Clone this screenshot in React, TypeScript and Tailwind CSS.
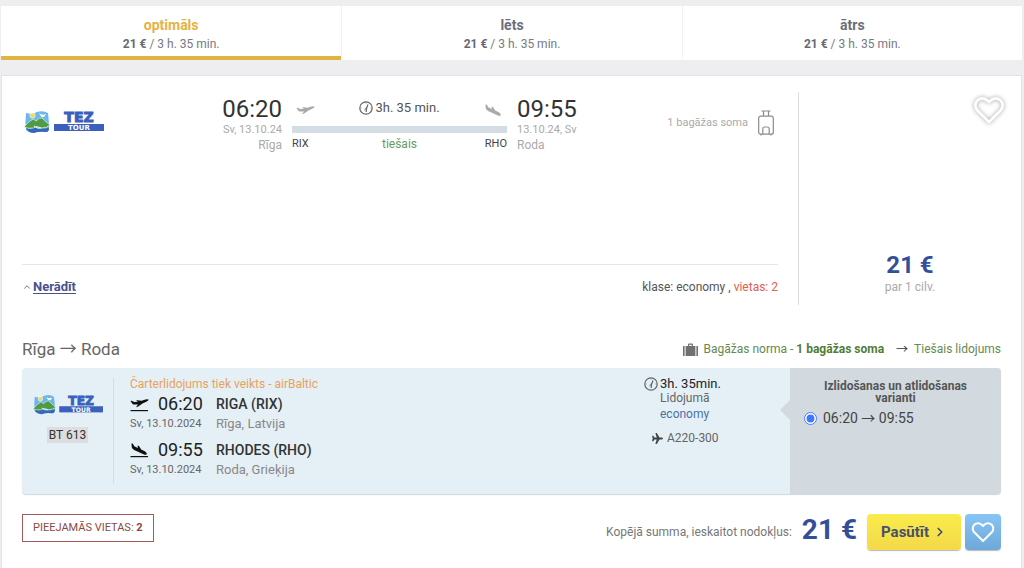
// App.tsx - Flight offer card with sort tabs, itinerary details and order bar.
import { ChevronRight, ChevronUp } from "lucide-react";

const tabs = [
  { id: "optimal", label: "optimāls", active: true },
  { id: "cheap", label: "lēts", active: false },
  { id: "fast", label: "ātrs", active: false },
];

const stops = [
  { kind: "takeoff", time: "06:20", airport: "RIGA (RIX)", place: "Rīga, Latvija" },
  { kind: "landing", time: "09:55", airport: "RHODES (RHO)", place: "Roda, Grieķija" },
];

function TezLogo({ className }: { className?: string }) {
  return (
    <svg viewBox="0 0 80 24" className={className} role="img" aria-label="Tez Tour">
      <path d="M2 3Q8 5 13 2Q19 0 24 3Q25 10 25 18Q25 22 22 22Q15 21 10 22.500Q5 23 2 20Q1 12 2 3Z" fill="#6db5ea" />
      <path d="M15 3Q18 6 22 4L20 7Q17 8 15 3Z" fill="#ffffff" />
      <circle cx="8.500" cy="5.500" r="3" fill="#fff" opacity="0.7" />
      <circle cx="8.500" cy="5.500" r="2.200" fill="#f7dc4a" />
      <path d="M0 17Q4 12 9 9Q11 10 12 11Q16 7 18 8Q22 12 26 15Q23 18 17 18Q12 15 10 18Q4 19 0 17Z" fill="#4f9c45" stroke="#fff" strokeWidth="0.6" />
      <path d="M2 18Q7 20 12 17.500Q18 20 25 17.500Q25 22 22 22Q15 21 10 23Q4 23 2 18Z" fill="#3568b5" />
      <path d="M10 16Q13 19 17 18" fill="none" stroke="#fff" strokeWidth="1" />
      <rect x="30" y="14" width="50" height="7" fill="#3a5fbd" />
      <text x="55" y="12" textAnchor="middle" fontFamily="DejaVu Sans" fontWeight="700" fontSize="14" fill="#3a5fbd" stroke="#3a5fbd" strokeWidth="1">
        TEZ
      </text>
      <text x="55" y="20" textAnchor="middle" fontFamily="DejaVu Sans" fontWeight="700" fontSize="7" fill="#fff">
        TOUR
      </text>
    </svg>
  );
}

function PlaneIcon({ kind, line, className }: { kind: string; line?: boolean; className?: string }) {
  return (
    <svg viewBox="0 0 19 18" className={className} fill="currentColor" aria-hidden="true">
      {kind === "takeoff" ? (
        <path d="M0.500 5L1.800 4.800L4.200 6.100L8 5.700L6 4.600L7.600 4.300L11.500 4.700L15.500 3.500Q18.300 2.800 18.700 3.700Q18.500 4.800 15.800 5.900L12.500 7.400L7.800 10.800L6 11.200L8 8.500L3.500 8.600Q2.500 8.400 0.500 5Z" />
      ) : (
        <path d="M1.500 1.200L2.900 1.700L4.300 4.300L7.800 6L7.600 3.400L9 4L11.200 7.400L14.800 9.200Q17.200 10.800 16.800 12.200Q15.900 13.200 13.400 12.200L4.100 8Q1.800 6.300 1.700 5Z" />
      )}
      {line && <rect x="0.500" y="14" width="17.500" height="1.200" />}
    </svg>
  );
}

function ClockIcon() {
  return (
    <svg viewBox="0 0 14 14" className="size-3.5 text-[#666]" fill="none" stroke="currentColor" aria-hidden="true">
      <circle cx="7" cy="7" r="6.200" strokeWidth="1.200" />
      <path d="M9 3.500L7.500 7.500L7.200 11" strokeWidth="1.200" />
      <path d="M8 6.500Q5.800 6.800 5.800 9.500" strokeWidth="0.800" />
      <path d="M7 1.500v1M12.500 7h-1M1.500 7h1" strokeWidth="0.700" />
    </svg>
  );
}

function BagIcon() {
  return (
    <svg viewBox="0 0 16 26" className="h-[26px] w-4 text-[#8c8c8c]" fill="none" stroke="currentColor" strokeWidth="1.200" aria-hidden="true">
      <path d="M3.500 1h9M5.500 1v5M10.500 1v5" />
      <rect x="0.700" y="6.200" width="14.600" height="18" rx="2" />
      <path d="M4.800 24v-5q0-2 2-2h2.400q2 0 2 2v5M3 24v1.500M13 24v1.500" />
    </svg>
  );
}

function SuitcaseIcon() {
  return (
    <svg viewBox="0 0 15 13" className="h-[13px] w-[15px] text-[#707070]" fill="currentColor" aria-hidden="true">
      <path d="M0 3h1.600v10H0zM13.400 3H15v10h-1.600zM2.600 3H5V1.500Q5 0.500 6 0.500h3q1 0 1 1V3h2.400v10H2.600zM6.200 3h2.600V1.700H6.200z" fillRule="evenodd" />
    </svg>
  );
}

function JetIcon() {
  return (
    <svg viewBox="0 0 11 11" className="size-[11px] text-[#444]" fill="currentColor" aria-hidden="true">
      <path d="M0 2.800h1.200L2.500 4.600h2.200L3.400 0h1.400l2.700 4.600H10q1 .4 1 .9t-1 .9H7.500L4.800 11H3.400l1.300-4.600H2.500L1.200 8.200H0l.7-2.700z" />
    </svg>
  );
}

function HeartIcon({ className }: { className?: string }) {
  return (
    <svg viewBox="0 0 24 24" className={className} fill="none" stroke="#fff" strokeWidth="2" strokeLinejoin="round" aria-hidden="true">
      <path d="M12 21L3 12Q0.500 8.500 3 5Q7 1.500 11 5L12 6L13 5Q17 1.500 21 5Q23.500 8.500 21 12Z" />
    </svg>
  );
}

function Arrow() {
  return <span className="font-['Noto_Sans_CJK_JP',sans-serif] leading-none">→</span>;
}

function SortTabs() {
  return (
    <div className="mt-1.5 mr-0.5 ml-px grid grid-cols-3 bg-white" role="tablist">
      {tabs.map((tab) => (
        <button
          key={tab.id}
          type="button"
          role="tab"
          aria-selected={tab.active}
          className={
            tab.active
              ? "h-[54px] border-b-4 border-[#e3b341] pt-1.5 text-[#e3b341]"
              : "h-[54px] border-b-4 border-l border-b-transparent border-l-[#f0f1f4] pt-1.5 text-[#6b6e78]"
          }
        >
          <span className="block text-sm leading-5 font-bold">{tab.label}</span>
          <span className="block text-xs leading-[18px] text-[#777a83]">
            <b className="text-[#666974]">21 €</b> / 3 h. 35 min.
          </span>
        </button>
      ))}
    </div>
  );
}

function FlightSummary() {
  return (
    <div className="flex min-h-[173px] items-start border-b border-[#e6e6e6] pt-0.5">
      <TezLogo className="mt-4 ml-0.5 h-6 w-20 shrink-0" />
      <div className="ml-[98px] w-20 shrink-0 text-right">
        <p className="text-2xl leading-[30px] text-[#333]">06:20</p>
        <p className="text-[11px] leading-3 text-[#aaa]">Sv, 13.10.24</p>
        <p className="text-xs leading-[18px] text-[#aaa]">Rīga</p>
      </div>
      <div className="mx-2.5 max-w-[215px] flex-1">
        <div className="flex h-7 items-center justify-between px-1 text-[#aaa]">
          <PlaneIcon kind="takeoff" className="mt-2 h-[18px] w-[19px]" />
          <span className="flex items-center gap-0.5 text-[13px] text-[#555]">
            <ClockIcon />
            3h. 35 min.
          </span>
          <PlaneIcon kind="landing" className="mt-2 h-[18px] w-[19px]" />
        </div>
        <div className="flex h-3.5 items-center">
          <div className="h-[7px] w-full bg-[#d3dde3]" />
        </div>
        <div className="grid grid-cols-3 text-[11px] leading-4 text-[#444]">
          <span>RIX</span>
          <span className="text-center text-xs text-[#689a62]">tiešais</span>
          <span className="text-right">RHO</span>
        </div>
      </div>
      <div className="shrink-0">
        <p className="text-2xl leading-[30px] text-[#333]">09:55</p>
        <p className="text-[11px] leading-3 text-[#aaa]">13.10.24, Sv</p>
        <p className="text-xs leading-[18px] text-[#aaa]">Roda</p>
      </div>
      <div className="mt-4 mr-1 ml-auto flex shrink-0 items-center gap-2.5">
        <span className="text-[11px] text-[#aaa]">1 bagāžas soma</span>
        <BagIcon />
      </div>
    </div>
  );
}

function OfferTop() {
  return (
    <section className="flex pt-4 pl-5">
      <div className="min-w-0 flex-1 pr-5">
        <FlightSummary />
        <div className="flex items-center justify-between pt-3 text-[13px] leading-5">
          <a href="#details" className="flex items-center gap-px font-bold text-[#47528f]">
            <ChevronUp className="size-2.5" aria-hidden="true" />
            <span className="underline underline-offset-2">Nerādīt</span>
          </a>
          <p className="text-xs text-[#555]">
            klase: economy , <span className="text-[#e0604e]">vietas: 2</span>
          </p>
        </div>
      </div>
      <div className="flex min-h-[213px] w-[223px] flex-col items-center border-l border-[#dcdcdc] pb-2.5">
        <button type="button" aria-label="Pievienot izlasei" className="mt-0.5 mr-4 self-end">
          <HeartIcon className="size-8 overflow-visible drop-shadow-[0_0_2px_#999]" />
        </button>
        <p className="mt-auto text-2xl leading-7 font-bold text-[#344f9a]">21 €</p>
        <p className="text-xs leading-4 text-[#aaa]">par 1 cilv.</p>
      </div>
    </section>
  );
}

function Itinerary() {
  return (
    <section id="details" className="mx-5">
      <div className="flex items-center justify-between pt-8">
        <h2 className="text-[17px] leading-6 text-[#666]">
          Rīga <Arrow /> Roda
        </h2>
        <p className="flex items-center text-xs leading-5 text-[#66894f]">
          <SuitcaseIcon />
          <span className="ml-1.5">
            Bagāžas norma - <b className="text-[#4f7d36]">1 bagāžas soma</b>
          </span>
          <span className="mr-1.5 ml-3 flex text-[#333]">
            <Arrow />
          </span>
          Tiešais lidojums
        </p>
      </div>

      <div className="mt-[7px] flex min-h-[126px] rounded bg-[#e4f0f5] shadow-[0_1px_1px_#d0d8dc]">
        <div className="my-2.5 flex w-[92px] shrink-0 flex-col items-center border-r border-[#d3dde1] pt-4">
          <TezLogo className="h-[21px] w-[70px]" />
          <span className="mt-3 bg-[#dddcde] px-0.5 text-xs leading-4 text-[#333]">BT 613</span>
        </div>

        <div className="min-w-0 flex-1 pt-2 pl-4">
          <p className="text-xs leading-4 text-[#eba05a]">Čarterlidojums tiek veikts - airBaltic</p>
          {stops.map((stop) => (
            <div key={stop.kind} className="mb-1.5 grid grid-cols-[28px_58px_1fr]">
              <PlaneIcon kind={stop.kind} line className="mt-1 h-[18px] w-[19px] text-[#111]" />
              <span className="text-lg leading-6 text-[#222]">{stop.time}</span>
              <span className="text-sm leading-6 font-medium text-[#333]">{stop.airport}</span>
              <span className="col-span-2 text-[11px] leading-4 text-[#666]">Sv, 13.10.2024</span>
              <span className="text-[13px] leading-4 text-[#888]">{stop.place}</span>
            </div>
          ))}
        </div>

        <div className="w-[146px] shrink-0 pt-2">
          <p className="flex items-center gap-0.5 text-[13px] leading-4 text-[#222]">
            <ClockIcon />
            3h. 35min.
          </p>
          <p className="ml-4 text-xs leading-3 text-[#666]">Lidojumā</p>
          <p className="ml-4 pt-0.5 text-xs leading-4 text-[#4c71a8]">economy</p>
          <p className="ml-2 flex items-center gap-1 pt-2 text-xs leading-4 text-[#666]">
            <JetIcon />
            A220-300
          </p>
        </div>

        <fieldset className="relative w-[211px] shrink-0 rounded-r bg-[#d2dae0] px-3.5 pt-3 text-[#555]">
          <span className="absolute top-8 -left-2.5 border-y-[10px] border-r-[10px] border-y-transparent border-r-[#d2dae0]" />
          <p className="text-center text-xs leading-3 font-bold">Izlidošanas un atlidošanas varianti</p>
          <label className="mt-1 flex items-center gap-1.5 text-sm leading-5 text-[#444]">
            <input type="radio" name="variant" defaultChecked className="size-[13px] accent-[#3f78ff]" />
            <span>
              06:20 <Arrow /> 09:55
            </span>
          </label>
        </fieldset>
      </div>
    </section>
  );
}

function OrderBar() {
  return (
    <footer className="mx-5 mt-5 mb-4 flex items-start">
      <p className="border border-[#a85a58] px-2.5 text-[11px] leading-[26px] text-[#8c4a42]">
        PIEEJAMĀS VIETAS: <b>2</b>
      </p>
      <div className="ml-auto flex items-center">
        <span className="text-xs text-[#777]">Kopējā summa, ieskaitot nodokļus:</span>
        <strong className="mx-2.5 pb-1 text-[28px] leading-8 font-bold text-[#344f9a]">21 €</strong>
        <button
          type="button"
          className="flex h-9 w-[94px] items-center justify-center gap-1 rounded bg-linear-to-b from-[#f9ec4c] to-[#f4d949] text-[15px] font-bold text-[#47506b] shadow-[0_1px_1px_#b9b9b9]"
        >
          Pasūtīt
          <ChevronRight className="size-3.5" strokeWidth={3} aria-hidden="true" />
        </button>
        <button
          type="button"
          aria-label="Pievienot izlasei"
          className="ml-1 flex size-9 items-center justify-center rounded bg-linear-to-b from-[#87c5f7] to-[#6ea9d8] shadow-[0_1px_1px_#b9b9b9]"
        >
          <HeartIcon className="size-6" />
        </button>
      </div>
    </footer>
  );
}

export default function App() {
  return (
    <div className="flex min-h-screen flex-col bg-[#eeeef1] font-['Roboto','Liberation_Sans',sans-serif]">
      <SortTabs />
      <main className="mt-[15px] mr-0.5 ml-px flex-1 border border-b-0 border-[#dde5ea] bg-white">
        <OfferTop />
        <Itinerary />
        <OrderBar />
      </main>
    </div>
  );
}
